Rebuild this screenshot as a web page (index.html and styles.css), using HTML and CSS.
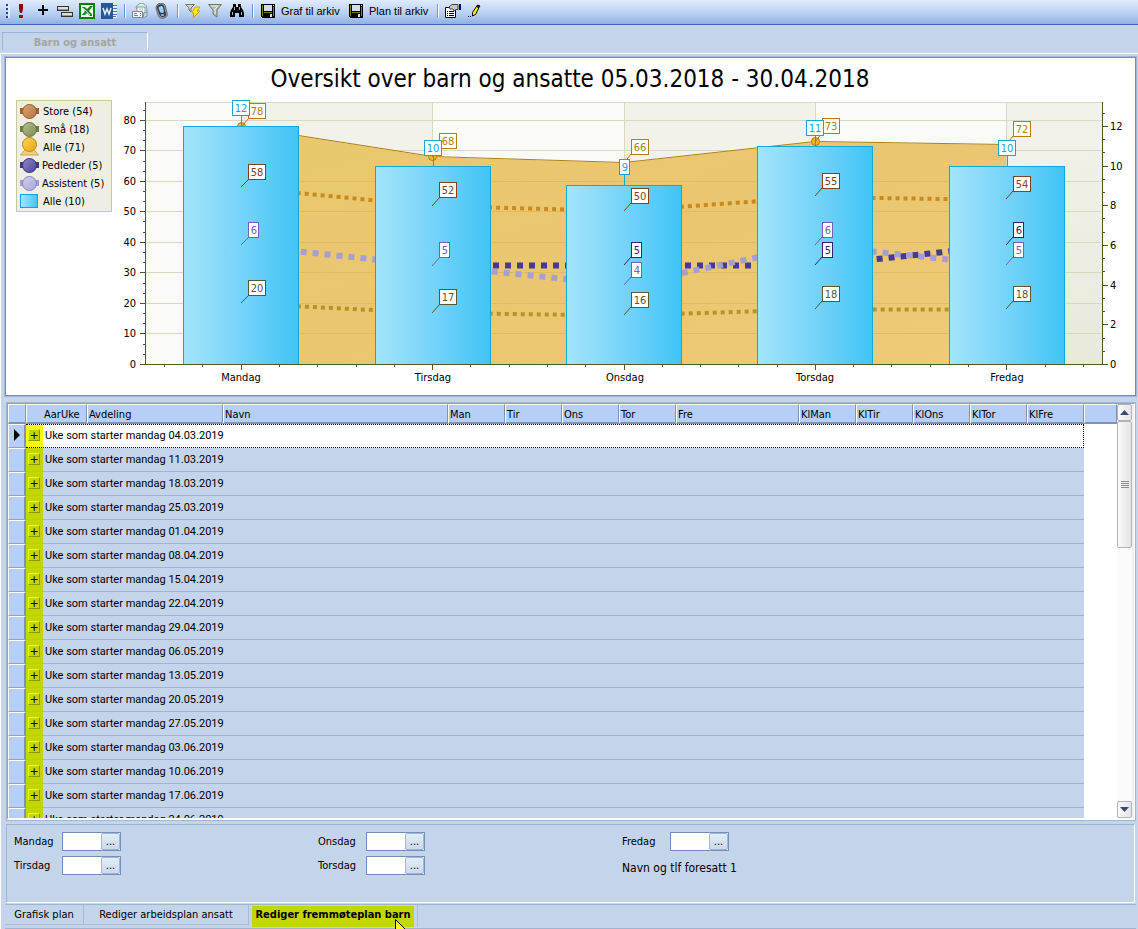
FILE: index.html
```html
<!DOCTYPE html>
<html lang="no">
<head>
<meta charset="utf-8">
<meta name="viewport" content="width=device-width, initial-scale=1">
<title>Barn og ansatt</title>
<link rel="stylesheet" href="styles.css">
</head>
<body>
<div class="toolbar" role="toolbar" aria-label="Verktøylinje">
  <span class="grip"></span>
  <button class="tool" type="button" aria-label="Oppdater"><svg class="icon" viewBox="0 0 16 16"><path d="M6 1h4v5l-1 4H7L6 6zM6 12h4v3H6z" fill="#8c0000"/></svg></button>
  <button class="tool" type="button" aria-label="Ny"><svg class="icon" viewBox="0 0 16 16" shape-rendering="crispEdges"><path d="M7 2h2v4h4v2H9v4H7V8H3V6h4z" fill="#000"/></svg></button>
  <button class="tool" type="button" aria-label="Gruppe"><svg class="icon" viewBox="0 0 16 16" shape-rendering="crispEdges"><path d="M0 3h12v5H0zM4 9h12v5H4z" fill="#333"/><path d="M1 4h10v2H1zM5 10h10v2H5z" fill="#ddd"/><path d="M1 6h10v1H1zM5 12h10v1H5z" fill="#999"/></svg></button>
  <button class="tool" type="button" aria-label="Excel"><svg class="icon" viewBox="0 0 16 16"><path d="M0 0h16v16H0z" fill="#008000"/><path d="M2 2h12v12H2z" fill="#fff"/><path d="M3 4h3l2 2 3-3h3l-4 5 3 3v2h-2L8 10l-2 2H3l3-4z" fill="#178a22"/><path d="M4 5l7 7" stroke="#b5deb5"/></svg></button>
  <button class="tool" type="button" aria-label="Word"><svg class="icon" viewBox="0 0 16 16"><path d="M11 1h5v14h-5z" fill="#e8f0fc"/><path d="M12 2.500h4M12 5.500h4M12 8.500h4M12 11.500h4M12 13.500h3" stroke="#4b73b5"/><path d="M0 0h12v16H0z" fill="#2a5699"/><path d="M2 5l2 6 2-5 2 5 2-6" fill="none" stroke="#e4edff" stroke-width="1.500"/></svg></button>
  <span class="sep"></span>
  <button class="tool" type="button" aria-label="Skriv ut"><svg class="icon" viewBox="0 0 16 16"><path d="M4 5c1-4 5-6 8-4 3 1 3 5 3 9l-4 1z" fill="#d9eef0" stroke="#75969c"/><path d="M5 4h8v6H5z" fill="#fff" stroke="#819ba1"/><path d="M7 5h5M7 7h4" stroke="#b1cbb5"/><path d="M.5 8.500h10v6H.5z" fill="#f4fffc" stroke="#668d91"/><path d="M2 10.500h3M2 12.500h4M8 10.500h1M8 12.500h1" stroke="#3b9c92"/><path d="M12 10l3-1v4l-4 2z" fill="#cfe0dc" stroke="#7e9998"/></svg></button>
  <button class="tool" type="button" aria-label="Telefon"><svg class="icon" viewBox="0 0 16 16"><path d="M4 1q5-2 7 1l2 8q1 4-3 5-5 1-6-3L2 5Q2 2 4 1z" fill="#a2a2aa" stroke="#666"/><path d="M4 2q5-2 6 1l2 8q0 3-3 3-3 0-4-3L3 5q0-2 1-3z" fill="#323d52"/><path d="M5 4q3-2 4 0l1 5q-2 2-4 0L4.500 5z" fill="#91d0ff"/><path d="M7 12h3" stroke="#fff"/></svg></button>
  <span class="sep"></span>
  <button class="tool" type="button" aria-label="Hurtigfilter"><svg class="icon" viewBox="0 0 16 16"><path d="M.5 1.500h9L6 5v4L4 7V5z" fill="#ced4c9" stroke="#6a7968"/><path d="M10 4h5l-3 4h3l-7 7 1-5H7z" fill="#fff000" stroke="#d6a500"/></svg></button>
  <button class="tool" type="button" aria-label="Filter"><svg class="icon" viewBox="0 0 16 16"><path d="M1.500 1.500h13L10 7v7l-4-3V7z" fill="#b9bdb1" stroke="#6c796a"/><path d="M4 3h7L8 6v5" fill="none" stroke="#e9ece6"/></svg></button>
  <button class="tool" type="button" aria-label="Søk"><svg class="icon" viewBox="0 0 16 16"><path d="M4 1h3v3h2V1h3v3l2 3 1 3v4h-5v-4H6v4H1v-4l1-3 2-3z" fill="#000"/><path d="M5.500 4v3M10.500 4v3M3.500 9v3M12.500 9v3" stroke="#9fb0c8"/></svg></button>
  <span class="sep"></span>
  <button class="tool wide" type="button"><svg class="icon" viewBox="0 0 16 16" shape-rendering="crispEdges"><path d="M1 1h14v14H2l-1-1z" fill="#000"/><path d="M2 2h1v11H2zM13 4h1v9h-1zM4 9h8v1H4z" fill="#808000"/><path d="M4 2h8v6H4zM13 2h1v1h-1zM10 11h2v3h-2z" fill="#d2def1"/></svg>Graf til arkiv</button>
  <button class="tool wide" type="button"><svg class="icon" viewBox="0 0 16 16" shape-rendering="crispEdges"><path d="M1 1h14v14H2l-1-1z" fill="#000"/><path d="M2 2h1v11H2zM13 4h1v9h-1zM4 9h8v1H4z" fill="#808000"/><path d="M4 2h8v6H4zM13 2h1v1h-1zM10 11h2v3h-2z" fill="#d2def1"/></svg>Plan til arkiv</button>
  <span class="sep"></span>
  <button class="tool" type="button" aria-label="Egenskaper"><svg class="icon" viewBox="0 0 16 16"><path d="M.5 4.500h10v10H.5z" fill="#fff" stroke="#000"/><path d="M2 8.500h1M4 8.500h5M2 10.500h1M4 10.500h5M2 12.500h1M4 12.500h5" stroke="#000"/><path d="M4 4l3-2.500h6v5h-2L9 8 8 6 5 6z" fill="#c6c6c6" stroke="#444"/><path d="M14 1h2v6h-2z" fill="#000080"/></svg></button>
  <button class="tool" type="button" aria-label="Rediger"><svg class="icon" viewBox="0 0 16 16"><path d="M5.500 9.500l4-6 2.500 1-3.500 7-3 1.500z" fill="#fff200" stroke="#000"/><path d="M9.500 3.500l1-1.500 2.500 1-1 1.500z" fill="#333" stroke="#000"/><path d="M1 13.500h1M3 13.500h1" stroke="#000"/></svg></button>
</div>

<div class="top-tabs"><button class="top-tab" type="button" disabled>Barn og ansatt</button></div>

<main class="page">
  <section class="chart">
    <svg class="plot" viewBox="6 58 1129 337" role="img" aria-label="Oversikt over barn og ansatte">
      <defs>
        <linearGradient id="bar" x1="0" x2="1"><stop offset="0" stop-color="#a3e5fa"/><stop offset=".42" stop-color="#7ed6fa"/><stop offset="1" stop-color="#40c4f6"/></linearGradient>
        <linearGradient id="back" x1="0" y1="0" x2="1" y2="1"><stop offset="0" stop-color="#fafaf6"/><stop offset=".5" stop-color="#fafaf7"/><stop offset="1" stop-color="#ecece1"/></linearGradient>
        <linearGradient id="area" x1="0" y1="0" x2="1" y2="1"><stop offset="0" stop-color="#e9c96c"/><stop offset=".5" stop-color="#ebc671"/><stop offset="1" stop-color="#eecb77"/></linearGradient>
        <linearGradient id="m1" x2="1" y2="1"><stop stop-color="#dda378"/><stop offset="1" stop-color="#b9713e"/></linearGradient>
        <linearGradient id="m2" x2="1" y2="1"><stop stop-color="#b3bf8b"/><stop offset="1" stop-color="#7e8e54"/></linearGradient>
        <linearGradient id="m3" x2="1" y2="1"><stop stop-color="#fdd35a"/><stop offset="1" stop-color="#e9a70a"/></linearGradient>
        <linearGradient id="m4" x2="1" y2="1"><stop stop-color="#8f89cc"/><stop offset="1" stop-color="#4e4596"/></linearGradient>
        <linearGradient id="m5" x2="1" y2="1"><stop stop-color="#d4d1ee"/><stop offset="1" stop-color="#aaa4d8"/></linearGradient>
      </defs>
      <text class="chart-title" x="570" y="87">Oversikt over barn og ansatte 05.03.2018 - 30.04.2018</text>

      <g class="crisp">
        <rect x="16.500" y="100.500" width="95" height="111" fill="#eeeee2" stroke="#c5c8a0"/>
        <path d="M20 108h19v6H20z" fill="#a5622f"/><path d="M20 126h19v6H20z" fill="#6d7f45"/><path d="M20 162h19v6H20z" fill="#413889"/><path d="M20 180h19v6H20z" fill="#a49dd5"/>
      </g>
      <path d="M20.500 155l5-6h8l5 6z" fill="#edcf83" stroke="#d2a84a"/>
      <circle cx="29.500" cy="111.500" r="7" fill="url(#m1)" stroke="#995a2a"/>
      <circle cx="29.500" cy="129.500" r="7" fill="url(#m2)" stroke="#66753e"/>
      <circle cx="29.500" cy="144.500" r="7" fill="url(#m3)" stroke="#bd890c"/>
      <circle cx="29.500" cy="165.500" r="7" fill="url(#m4)" stroke="#3b3279"/>
      <circle cx="29.500" cy="183.500" r="7" fill="url(#m5)" stroke="#8a82c1"/>
      <rect x="20.500" y="194.500" width="17" height="13" fill="url(#bar)" stroke="#0ea6d6"/>
      <g class="label">
        <text x="43" y="115">Store (54)</text><text x="44" y="133">Små (18)</text><text x="43" y="151">Alle (71)</text><text x="42" y="169">Pedleder (5)</text><text x="42" y="187">Assistent (5)</text><text x="43" y="205">Alle (10)</text>
      </g>

      <rect x="146" y="102" width="956" height="262" fill="url(#back)"/>
      <path d="M241 102h192v262H241zM624 102h191v262H624zM1006 102h96v262h-96z" fill="#dedfc8" opacity=".28"/>
      <path class="grid-lines" d="M146 102.500h956M146 120.500h956M146 150.500h956M146 181.500h956M146 211.500h956M146 242.500h956M146 272.500h956M146 303.500h956M146 333.500h956M241.500 102v262M432.500 102v262M624.500 102v262M815.500 102v262M1006.500 102v262"/>
      <path d="M241 127L433 157 624 163 815 142 1006 145V364H241z" fill="url(#area)"/>
      <path d="M241 181.500h765M241 211.500h765M241 242.500h765M241 272.500h765M241 303.500h765M241 333.500h765" stroke="#dfbb61" class="crisp"/>
      <path d="M241 126.500L433 156.500 624 162.500 815 141.500 1006 144.500" fill="none" stroke="#b07f14"/>
      <g fill="none">
        <g stroke="#cb8a1c" stroke-width="4" stroke-dasharray="4 4"><path d="M241 187.500L433 206 624 211 815 197 1006 200"/></g>
        <g stroke="#b29628" stroke-width="4" stroke-dasharray="4 4"><path d="M241 303.500L433 313 624 315.500 815 309.500H1006"/></g>
        <path d="M433 265.500H815L1006 245.500" stroke="#463b91" stroke-width="6" stroke-dasharray="6 6"/>
        <path d="M241 245.500L433 265.500 624 285 815 245.500 1006 265.500" stroke="#a79fd2" stroke-width="6" stroke-dasharray="6 6"/>
      </g>
      <g fill="#efb628" stroke="#b07f14"><circle cx="241.500" cy="126.500" r="4"/><circle cx="432.500" cy="156.500" r="4"/><circle cx="815.500" cy="141.500" r="4"/></g>
      <g fill="url(#bar)" stroke="#10aad8" class="crisp">
        <rect x="183.500" y="126.500" width="115" height="238"/><rect x="375.500" y="166.500" width="115" height="198"/><rect x="566.500" y="185.500" width="115" height="179"/><rect x="757.500" y="146.500" width="115" height="218"/><rect x="949.500" y="166.500" width="115" height="198"/>
      </g>
      <path class="axis" d="M145.500 102v263M140 364.500h968M1102.500 102v263M140 120.500h5M140 150.500h5M140 181.500h5M140 211.500h5M140 242.500h5M140 272.500h5M140 303.500h5M140 333.500h5M143 110.500h2M143 130.500h2M143 140.500h2M143 161.500h2M143 171.500h2M143 191.500h2M143 201.500h2M143 221.500h2M143 232.500h2M143 252.500h2M143 262.500h2M143 283.500h2M143 293.500h2M143 313.500h2M143 323.500h2M143 344.500h2M143 354.500h2M1103 126.500h5M1103 166.500h5M1103 205.500h5M1103 245.500h5M1103 285.500h5M1103 324.500h5M1103 113.500h2M1103 139.500h2M1103 152.500h2M1103 179.500h2M1103 192.500h2M1103 218.500h2M1103 232.500h2M1103 258.500h2M1103 271.500h2M1103 298.500h2M1103 311.500h2M1103 338.500h2M1103 351.500h2M241.500 365v5M432.500 365v5M624.500 365v5M815.500 365v5M1006.500 365v5M164.500 365v2M202.500 365v2M279.500 365v2M317.500 365v2M356.500 365v2M394.500 365v2M470.500 365v2M509.500 365v2M547.500 365v2M585.500 365v2M662.500 365v2M700.500 365v2M738.500 365v2M777.500 365v2M853.500 365v2M891.500 365v2M930.500 365v2M968.500 365v2M1045.500 365v2M1083.500 365v2"/>
      <g class="label end"><text x="136" y="124">80</text><text x="136" y="154">70</text><text x="136" y="185">60</text><text x="136" y="215">50</text><text x="136" y="246">40</text><text x="136" y="276">30</text><text x="136" y="307">20</text><text x="136" y="337">10</text><text x="136" y="368">0</text></g>
      <g class="label"><text x="1110" y="130">12</text><text x="1110" y="170">10</text><text x="1110" y="209">8</text><text x="1110" y="249">6</text><text x="1110" y="289">4</text><text x="1110" y="328">2</text><text x="1110" y="368">0</text></g>
      <g class="label mid"><text x="241" y="381">Mandag</text><text x="433" y="381">Tirsdag</text><text x="625" y="381">Onsdag</text><text x="815" y="381">Torsdag</text><text x="1007" y="381">Fredag</text></g>

      <g class="tag gold"><path d="M249 118l-8 9M440 148l-8 9M631 154l-7 9M822 133l-7 9M1013 136l-7 9"/><rect x="248.500" y="103.500" width="17" height="15"/><rect x="439.500" y="133.500" width="17" height="15"/><rect x="631.500" y="139.500" width="17" height="15"/><rect x="822.500" y="118.500" width="17" height="15"/><rect x="1013.500" y="121.500" width="17" height="15"/>
        <text x="257" y="115">78</text><text x="448" y="145">68</text><text x="640" y="151">66</text><text x="831" y="130">73</text><text x="1022" y="133">72</text></g>
      <g class="tag brown"><path d="M249 179l-8 8M440 197l-8 9M631 203l-7 8M822 188l-7 8M1013 191l-7 8"/><rect x="248.500" y="164.500" width="17" height="15"/><rect x="439.500" y="182.500" width="17" height="15"/><rect x="631.500" y="188.500" width="17" height="15"/><rect x="822.500" y="173.500" width="17" height="15"/><rect x="1013.500" y="176.500" width="17" height="15"/>
        <text x="257" y="176">58</text><text x="448" y="194">52</text><text x="640" y="200">50</text><text x="831" y="185">55</text><text x="1022" y="188">54</text></g>
      <g class="tag olive"><path d="M249 295l-8 8M440 304l-8 9M631 307l-7 8M822 301l-7 8M1013 301l-7 8"/><rect x="248.500" y="280.500" width="17" height="15"/><rect x="439.500" y="289.500" width="17" height="15"/><rect x="631.500" y="292.500" width="17" height="15"/><rect x="822.500" y="286.500" width="17" height="15"/><rect x="1013.500" y="286.500" width="17" height="15"/>
        <text x="257" y="292">20</text><text x="448" y="301">17</text><text x="640" y="304">16</text><text x="831" y="298">18</text><text x="1022" y="298">18</text></g>
      <g class="tag violet"><path d="M249 237l-8 8M440 257l-8 9M631 277l-7 8M822 237l-7 8M1013 257l-7 8"/><rect x="248.500" y="222.500" width="10" height="15"/><rect x="439.500" y="242.500" width="10" height="15"/><rect x="631.500" y="262.500" width="10" height="15"/><rect x="822.500" y="222.500" width="10" height="15"/><rect x="1013.500" y="242.500" width="10" height="15"/>
        <text x="254" y="234">6</text><text x="445" y="254">5</text><text x="637" y="274">4</text><text x="828" y="234">6</text><text x="1019" y="254">5</text></g>
      <g class="tag navy"><path d="M631 257l-7 8M822 257l-7 8M1013 237l-7 8"/><rect x="631.500" y="242.500" width="10" height="15"/><rect x="822.500" y="242.500" width="10" height="15"/><rect x="1013.500" y="222.500" width="10" height="15"/>
        <text x="637" y="254">5</text><text x="828" y="254">5</text><text x="1019" y="234">6</text></g>
      <g class="tag blue"><path d="M241.500 115v12M433.500 155v12M624.500 174v12M815.500 135v12M1007.500 155v12"/><rect x="232.500" y="100.500" width="17" height="15"/><rect x="424.500" y="140.500" width="17" height="15"/><rect x="619.500" y="159.500" width="10" height="15"/><rect x="806.500" y="120.500" width="17" height="15"/><rect x="998.500" y="140.500" width="17" height="15"/>
        <text x="241" y="112">12</text><text x="433" y="152">10</text><text x="625" y="171">9</text><text x="815" y="132">11</text><text x="1007" y="152">10</text></g>
    </svg>
  </section>

  <section class="grid-panel">
    <div class="grid-scroll">
      <table class="grid">
        <colgroup><col class="c-ind"><col class="c-year"><col class="c-dep"><col class="c-name"><col class="c-day"><col class="c-day"><col class="c-day"><col class="c-day"><col class="c-fri"><col class="c-day"><col class="c-day"><col class="c-day"><col class="c-day"><col class="c-day"><col></colgroup>
        <thead><tr><th></th><th class="year">AarUke</th><th>Avdeling</th><th>Navn</th><th>Man</th><th>Tir</th><th>Ons</th><th>Tor</th><th>Fre</th><th>KlMan</th><th>KlTir</th><th>KlOns</th><th>KlTor</th><th>KlFre</th><th></th></tr></thead>
        <tbody>
          <tr class="current"><td class="ind"><svg class="pointer" viewBox="0 0 6 12"><path d="M0 0l6 6-6 6z"/></svg></td><td class="week" colspan="13"><div class="group"><span class="mark"><button class="expand" type="button" aria-label="Utvid">+</button></span>Uke som starter mandag 04.03.2019</div></td><td></td></tr>
          <tr><td class="ind"></td><td class="week" colspan="13"><div class="group"><span class="mark"><button class="expand" type="button" aria-label="Utvid">+</button></span>Uke som starter mandag 11.03.2019</div></td><td></td></tr>
          <tr><td class="ind"></td><td class="week" colspan="13"><div class="group"><span class="mark"><button class="expand" type="button" aria-label="Utvid">+</button></span>Uke som starter mandag 18.03.2019</div></td><td></td></tr>
          <tr><td class="ind"></td><td class="week" colspan="13"><div class="group"><span class="mark"><button class="expand" type="button" aria-label="Utvid">+</button></span>Uke som starter mandag 25.03.2019</div></td><td></td></tr>
          <tr><td class="ind"></td><td class="week" colspan="13"><div class="group"><span class="mark"><button class="expand" type="button" aria-label="Utvid">+</button></span>Uke som starter mandag 01.04.2019</div></td><td></td></tr>
          <tr><td class="ind"></td><td class="week" colspan="13"><div class="group"><span class="mark"><button class="expand" type="button" aria-label="Utvid">+</button></span>Uke som starter mandag 08.04.2019</div></td><td></td></tr>
          <tr><td class="ind"></td><td class="week" colspan="13"><div class="group"><span class="mark"><button class="expand" type="button" aria-label="Utvid">+</button></span>Uke som starter mandag 15.04.2019</div></td><td></td></tr>
          <tr><td class="ind"></td><td class="week" colspan="13"><div class="group"><span class="mark"><button class="expand" type="button" aria-label="Utvid">+</button></span>Uke som starter mandag 22.04.2019</div></td><td></td></tr>
          <tr><td class="ind"></td><td class="week" colspan="13"><div class="group"><span class="mark"><button class="expand" type="button" aria-label="Utvid">+</button></span>Uke som starter mandag 29.04.2019</div></td><td></td></tr>
          <tr><td class="ind"></td><td class="week" colspan="13"><div class="group"><span class="mark"><button class="expand" type="button" aria-label="Utvid">+</button></span>Uke som starter mandag 06.05.2019</div></td><td></td></tr>
          <tr><td class="ind"></td><td class="week" colspan="13"><div class="group"><span class="mark"><button class="expand" type="button" aria-label="Utvid">+</button></span>Uke som starter mandag 13.05.2019</div></td><td></td></tr>
          <tr><td class="ind"></td><td class="week" colspan="13"><div class="group"><span class="mark"><button class="expand" type="button" aria-label="Utvid">+</button></span>Uke som starter mandag 20.05.2019</div></td><td></td></tr>
          <tr><td class="ind"></td><td class="week" colspan="13"><div class="group"><span class="mark"><button class="expand" type="button" aria-label="Utvid">+</button></span>Uke som starter mandag 27.05.2019</div></td><td></td></tr>
          <tr><td class="ind"></td><td class="week" colspan="13"><div class="group"><span class="mark"><button class="expand" type="button" aria-label="Utvid">+</button></span>Uke som starter mandag 03.06.2019</div></td><td></td></tr>
          <tr><td class="ind"></td><td class="week" colspan="13"><div class="group"><span class="mark"><button class="expand" type="button" aria-label="Utvid">+</button></span>Uke som starter mandag 10.06.2019</div></td><td></td></tr>
          <tr><td class="ind"></td><td class="week" colspan="13"><div class="group"><span class="mark"><button class="expand" type="button" aria-label="Utvid">+</button></span>Uke som starter mandag 17.06.2019</div></td><td></td></tr>
          <tr><td class="ind"></td><td class="week" colspan="13"><div class="group"><span class="mark"><button class="expand" type="button" aria-label="Utvid">+</button></span>Uke som starter mandag 24.06.2019</div></td><td></td></tr>
        </tbody>
      </table>
    </div>
    <div class="scrollbar">
      <button class="scroll-btn" type="button" aria-label="Rull opp"><svg class="arrow" viewBox="0 0 9 5"><path d="M0 5l4.500-5L9 5z"/></svg></button>
      <div class="thumb"><span class="ridges"></span></div>
      <span class="track"></span>
      <button class="scroll-btn" type="button" aria-label="Rull ned"><svg class="arrow" viewBox="0 0 9 5"><path d="M0 0h9L4.500 5z"/></svg></button>
    </div>
  </section>

  <section class="form">
    <div class="field"><label for="man">Mandag</label><span class="picker"><input id="man" type="text"><button type="button" aria-label="Velg mandag">...</button></span></div>
    <div class="field"><label for="ons">Onsdag</label><span class="picker"><input id="ons" type="text"><button type="button" aria-label="Velg onsdag">...</button></span></div>
    <div class="field"><label for="fre">Fredag</label><span class="picker"><input id="fre" type="text"><button type="button" aria-label="Velg fredag">...</button></span></div>
    <div class="field"><label for="tir">Tirsdag</label><span class="picker"><input id="tir" type="text"><button type="button" aria-label="Velg tirsdag">...</button></span></div>
    <div class="field"><label for="tor">Torsdag</label><span class="picker"><input id="tor" type="text"><button type="button" aria-label="Velg torsdag">...</button></span></div>
    <div class="contact">Navn og tlf foresatt 1</div>
  </section>

  <nav class="bottom-tabs">
    <button class="tab" type="button">Grafisk plan</button>
    <button class="tab tab-staff" type="button">Rediger arbeidsplan ansatt</button>
    <button class="tab tab-active" type="button"><span class="highlight">Rediger fremmøteplan barn</span></button>
  </nav>
</main>
<svg class="cursor" viewBox="0 0 12 20"><path d="M.5.500v16l4-4 3 7 3-1-3-6h5z" fill="#ff0" stroke="#000"/></svg>
</body>
</html>
```
FILE: styles.css
```css
* { box-sizing: border-box; }
body {
  margin: 0;
  height: 100vh;
  display: flex;
  flex-direction: column;
  overflow: hidden;
  background: #c4d4ea;
  color: #000;
  font: 11px/14px "DejaVu Sans Condensed", "DejaVu Sans", sans-serif;
}
button, input { font: inherit; color: inherit; }

.toolbar {
  flex: none;
  display: flex;
  align-items: center;
  height: 25px;
  padding: 0 0 2px 6px;
  background: linear-gradient(#dfebfd, #b5cdf2 60%, #8fb1e6);
  border-bottom: 1px solid #3c66ac;
}
.grip {
  width: 4px;
  height: 14px;
  background: repeating-linear-gradient(#27418c 0 2px, transparent 2px 4px);
  border-right: 2px solid #dfebfd;
}
.tool {
  display: flex;
  align-items: center;
  gap: 5px;
  height: 22px;
  padding: 0 3px;
  border: 0;
  background: none;
  font-family: "Liberation Sans", Arial, sans-serif;
  white-space: nowrap;
}
.wide { width: 88px; }
.icon { flex: none; width: 16px; height: 16px; }
.sep { width: 2px; height: 14px; margin: 0 3px 0 4px; background: linear-gradient(90deg, #6f94d3 50%, #fff 50%); }

.top-tabs { flex: none; height: 28px; padding: 7px 0 0 2px; }
.top-tab {
  width: 146px;
  height: 18px;
  padding: 2px 0 0;
  border: solid #9fb4d0;
  border-width: 1px 1px 0;
  border-right-color: #fff;
  background: none;
  color: #a6a69c;
  font: bold 11px/14px "DejaVu Sans Condensed", "DejaVu Sans", sans-serif;
}

.page {
  flex: 1;
  min-height: 0;
  display: flex;
  flex-direction: column;
  border-top: 1px solid #fff;
  border-left: 1px solid #fff;
  padding: 3px 2px 0 4px;
}
.chart { flex: none; border: 1px solid #81966a; background: #fff; outline: 1px solid #a2b7d4; }
.plot { display: block; width: 100%; height: auto; }
.plot text { font-family: "DejaVu Sans Condensed", "DejaVu Sans", sans-serif; }
.chart-title { font-size: 24px; text-anchor: middle; }
.label { font-size: 11px; }
.end { text-anchor: end; }
.mid { text-anchor: middle; }
.crisp { shape-rendering: crispEdges; }
.grid-lines { stroke: #d7d9c1; shape-rendering: crispEdges; }
.axis { stroke: #4a5a28; shape-rendering: crispEdges; }
.tag { font-size: 11px; text-anchor: middle; stroke: currentColor; }
.tag rect { fill: #fff; }
.tag text { fill: currentColor; stroke: none; }
.gold { color: #b07d10; }
.brown { color: #7e431b; }
.olive { color: #565a32; }
.violet { color: #7161b5; }
.navy { color: #2d2565; }
.blue { color: #16a6d2; }

.grid-panel {
  flex: 1;
  min-height: 0;
  display: flex;
  margin: 7px 1px 0 2px;
  border: 1px solid #8fa3bf;
  border-right-color: #fff;
  border-bottom: 2px solid #fff;
  outline: 1px solid #a2b7d4;
}
.grid-scroll { flex: 1; min-width: 0; overflow: hidden; background: #fff; }
.grid { width: 100%; table-layout: fixed; border-collapse: separate; border-spacing: 0; }
.c-ind { width: 18px; }
.c-year { width: 61px; }
.c-dep { width: 136px; }
.c-name { width: 225px; }
.c-day { width: 57px; }
.c-fri { width: 123px; }
.grid th {
  height: 20px;
  padding: 2px 0 0 1px;
  background: #b5cff8;
  border: 1px solid #fff;
  border-right-color: #8193b5;
  border-bottom: 2px solid #8193b5;
  font-weight: normal;
  line-height: 14px;
  text-align: left;
}
.grid .year { padding-left: 17px; }
.grid td { height: 24px; padding: 0; }
.grid .ind {
  background: #b5cff8;
  border: 1px solid #fff;
  border-right: 2px solid #8193b5;
  border-bottom-color: #8fa3bf;
}
.pointer { display: block; width: 6px; height: 12px; margin-left: 5px; margin-bottom: 3px; }
.grid .week { background: #c4d4ea; border-bottom: 1px solid #a0b4d0; }
.grid .current .week { background: #fff; border: 1px dotted #000; border-left: 0; }
.group { display: flex; gap: 2px; height: 23px; line-height: 24px; font-family: Roboto, "Liberation Sans", sans-serif; }
.current .group { height: 22px; line-height: 22px; }
.mark { width: 17px; padding: 5px 0 0 2px; background: #c4d600; }
.current .mark { background: #ff0; padding-top: 4px; }
.expand {
  display: block;
  width: 12px;
  height: 12px;
  padding: 0;
  border: 1px solid #eeff20;
  border-right-color: #8d9900;
  border-bottom-color: #8d9900;
  background: #c4d600;
  font: 11px/9px "DejaVu Sans", sans-serif;
}
.scrollbar { flex: none; width: 17px; display: flex; flex-direction: column; background: #fafafa; border-right: 2px solid #f2f0ea; }
.scroll-btn {
  flex: none;
  display: grid;
  place-items: center;
  height: 17px;
  padding: 0;
  border: 1px solid #b4b4b8;
  border-radius: 2px;
  background: linear-gradient(90deg, #fafafa, #e4e4e6);
}
.arrow { width: 9px; height: 5px; fill: #3c4a73; }
.thumb { flex: 0 1 127px; display: grid; place-items: center; border: 1px solid #b4b4b8; border-radius: 2px; background: linear-gradient(90deg, #fafafa, #e4e4e6); }
.ridges { width: 8px; height: 7px; background: repeating-linear-gradient(#8d8d8d 0 1px, transparent 1px 2px); }
.track { flex: 1; }

.form {
  flex: none;
  display: grid;
  grid-template-columns: 304px 304px 1fr;
  grid-auto-rows: 20px;
  row-gap: 4px;
  height: 79px;
  margin: 4px 1px 1px;
  padding: 7px 0 0 7px;
  border: 1px solid #fff;
  border-top-color: #9fb4d0;
  border-left-color: #9fb4d0;
}
.field { display: grid; grid-template-columns: 48px 59px; }
.field label { line-height: 20px; }
.picker { display: flex; height: 19px; border: 1px solid #7190b8; background: #fff; }
.picker input { flex: 1; min-width: 0; padding: 0 2px; border: 0; background: none; }
.picker button { width: 19px; padding: 0; border: 1px solid #a5b7d3; border-radius: 2px; background: linear-gradient(#e3edfa, #c9d9ee); line-height: 14px; }
.contact { font-size: 12px; line-height: 24px; }

.bottom-tabs { flex: none; display: flex; height: 25px; border-top: 1px solid #9fb4d0; border-bottom: 1px solid #9fb4d0; }
.tab { width: 79px; height: 20px; padding: 0; border: solid #a9bcd7; border-width: 0 1px 1px 0; background: none; white-space: nowrap; }
.tab-staff { width: 165px; }
.tab-active { width: 169px; height: 22px; padding: 0 3px; border-bottom: 0; font-weight: bold; }
.highlight { display: block; height: 21px; line-height: 18px; background: #c4d600; text-align: center; }
.cursor { position: absolute; left: 395px; bottom: -10px; width: 12px; height: 20px; }
```
